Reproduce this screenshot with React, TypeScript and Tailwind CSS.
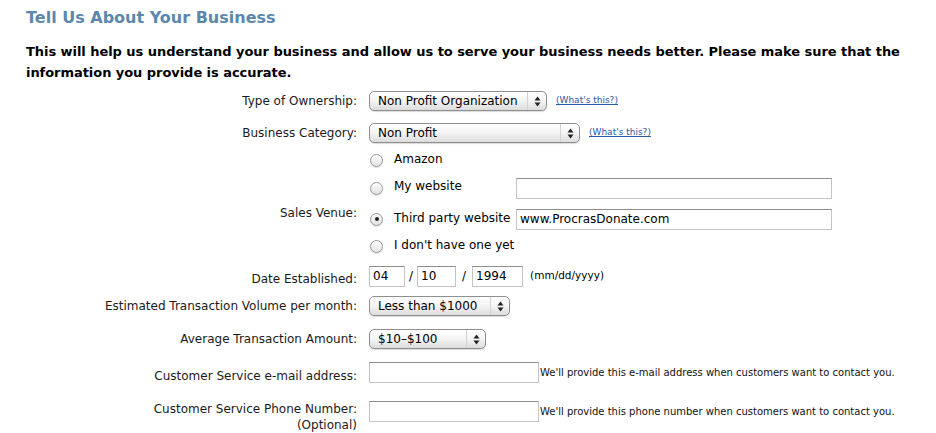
import React from 'react';

const label = "text-[12px] text-[#1a1a1a] text-right w-[357px] shrink-0";

function Arrows() {
  return (
    <svg width="7" height="11" viewBox="0 0 7 11" className="block">
      <path d="M3.5 0.5 L6.5 4.5 L0.5 4.5 Z" fill="#222" />
      <path d="M3.5 10.5 L6.5 6.5 L0.5 6.5 Z" fill="#222" />
    </svg>
  );
}

function Select({ value, width }: { value: string; width: number }) {
  return (
    <div
      className="h-[20px] flex items-stretch rounded-[5px] border border-[#8f8f8f] bg-gradient-to-b from-white via-[#f4f4f4] to-[#dcdcdc] shadow-[0_1px_1px_rgba(0,0,0,0.15)] overflow-hidden"
      style={{ width }}
    >
      <div className="flex-1 flex items-center pl-[8px] text-[12px] text-black leading-none">{value}</div>
      <div className="w-[19px] border-l border-[#d2d2d2] flex items-center justify-center">
        <Arrows />
      </div>
    </div>
  );
}

function TextBox({ width, value, height = 21 }: { width: number; value?: string; height?: number }) {
  return (
    <div
      className="border border-[#c4c4c4] border-t-[#8e8e8e] bg-white flex items-center pl-[3px] text-[12px] text-black"
      style={{ width, height }}
    >
      {value}
    </div>
  );
}

function Radio({ checked }: { checked?: boolean }) {
  return (
    <div className="w-[13px] h-[13px] rounded-full border border-[#9a9a9a] bg-gradient-to-b from-[#fdfdfd] to-[#e2e2e2] flex items-center justify-center shadow-[0_1px_1px_rgba(0,0,0,0.12)]">
      {checked && <div className="w-[4px] h-[4px] rounded-full bg-[#222]" />}
    </div>
  );
}

function WhatsThis() {
  return <a className="ml-[9px] text-[9px] text-[#2b5aa6] underline cursor-pointer">(What's this?)</a>;
}

export default function App() {
  return (
    <div className="w-[936px] min-h-[433px] bg-white font-['DejaVu_Sans',sans-serif] text-black">
      <div className="pl-[26px] pt-[8px]">
        <h1 className="text-[16px] font-bold text-[#5b87ad] leading-[20px]">Tell Us About Your Business</h1>
        <p className="mt-[13px] text-[13px] font-bold leading-[21px] w-[890px] tracking-[-0.05px]">
          This will help us understand your business and allow us to serve your business needs better. Please make sure that the information you provide is accurate.
        </p>
      </div>

      <div className="mt-[5px]">
        <div className="flex items-center h-[26px]">
          <div className={label}>Type of Ownership:</div>
          <div className="ml-[12px] flex items-center">
            <Select value="Non Profit Organization" width={178} />
            <WhatsThis />
          </div>
        </div>

        <div className="flex items-center h-[26px] mt-[6px]">
          <div className={label}>Business Category:</div>
          <div className="ml-[12px] flex items-center">
            <Select value="Non Profit" width={211} />
            <WhatsThis />
          </div>
        </div>

        <div className="flex items-center mt-[2px]">
          <div className={`${label} pt-[19px]`}>Sales Venue:</div>
          <div className="ml-[13px] flex flex-col">
            <div className="flex items-center h-[24px]">
              <Radio />
              <span className="ml-[11px] text-[12px] -mt-[3px]">Amazon</span>
            </div>
            <div className="flex items-center h-[32px]">
              <Radio />
              <span className="ml-[11px] text-[12px] w-[122px] -mt-[4px]">My website</span>
              <TextBox width={316} />
            </div>
            <div className="flex items-center h-[30px]">
              <Radio checked />
              <span className="ml-[11px] text-[12px] w-[122px] -mt-[3px]">Third party website</span>
              <TextBox width={316} value="www.ProcrasDonate.com" />
            </div>
            <div className="flex items-center h-[24px]">
              <Radio />
              <span className="ml-[11px] text-[12px] -mt-[3px]">I don't have one yet</span>
            </div>
          </div>
        </div>

        <div className="flex items-center h-[36px]">
          <div className={`${label} pt-[5px]`}>Date Established:</div>
          <div className="ml-[12px] flex items-center text-[12px]">
            <TextBox width={36} value="04" />
            <span className="mx-[4px]">/</span>
            <TextBox width={39} value="10" />
            <span className="mx-[6px]">/</span>
            <TextBox width={51} value="1994" />
            <span className="ml-[7px] text-[10.5px]">(mm/dd/yyyy)</span>
          </div>
        </div>

        <div className="flex items-center h-[24px]">
          <div className={label}>Estimated Transaction Volume per month:</div>
          <div className="ml-[12px]">
            <Select value="Less than $1000" width={141} />
          </div>
        </div>

        <div className="flex items-center h-[24px] mt-[9px]">
          <div className={label}>Average Transaction Amount:</div>
          <div className="ml-[12px]">
            <Select value="$10–$100" width={117} />
          </div>
        </div>

        <div className="flex items-center h-[24px] mt-[9px]">
          <div className={`${label} pt-[7px]`}>Customer Service e-mail address:</div>
          <div className="ml-[12px] flex items-center">
            <TextBox width={170} />
            <span className="ml-[1px] text-[10px] text-[#111]">We'll provide this e-mail address when customers want to contact you.</span>
          </div>
        </div>

        <div className="flex items-start mt-[17px]">
          <div className={`${label} leading-[16px]`}>
            Customer Service Phone Number:<br />(Optional)
          </div>
          <div className="ml-[12px] flex items-center">
            <TextBox width={170} />
            <span className="ml-[1px] text-[10px] text-[#111]">We'll provide this phone number when customers want to contact you.</span>
          </div>
        </div>
      </div>
    </div>
  );
}
